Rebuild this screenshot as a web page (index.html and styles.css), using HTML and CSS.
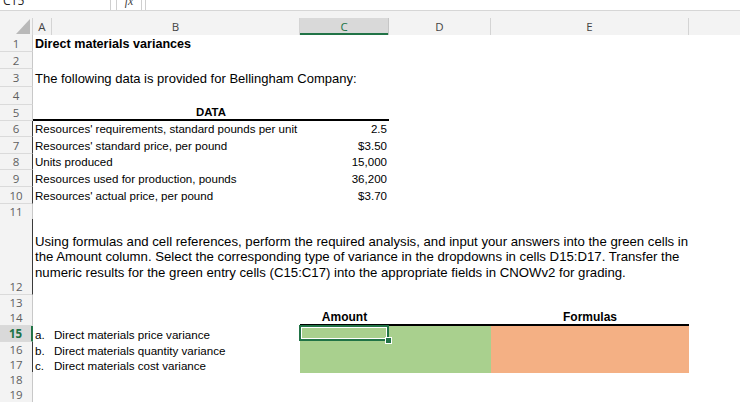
FILE: index.html
```html
<!DOCTYPE html>
<html>
<head>
<meta charset="utf-8">
<link rel="stylesheet" href="styles.css">
</head>
<body>
<div class="fbar">
  <div class="namebox"><span class="nb-text">C15</span><svg class="chev" width="8" height="5" viewBox="0 0 8 5"><polyline points="0.5,0.5 4,4 7.5,0.5" fill="none" stroke="#555" stroke-width="1"/></svg></div>
  <div class="fxbox"><span class="fx">fx</span></div>
  <div class="finput"></div>
</div>
<div class="chead">
  <div class="corner"><svg width="14" height="15" viewBox="0 0 14 15"><polygon points="14,0 14,15 0,15" fill="#b9b9b9"/></svg></div>
  <div class="ch">A</div>
  <div class="ch">B</div>
  <div class="ch sel">C</div>
  <div class="ch">D</div>
  <div class="ch">E</div>
  <div class="ch last"></div>
</div>
<div class="sheet">
  <div class="row h17"><div class="rh">1</div><div class="c span-ae title">Direct materials variances</div></div>
  <div class="row h17"><div class="rh">2</div></div>
  <div class="row h18"><div class="rh">3</div><div class="c span-ae intro">The following data is provided for Bellingham Company:</div></div>
  <div class="row h18"><div class="rh">4</div></div>
  <div class="row h16"><div class="rh">5</div><div class="c span-ac data-head">DATA</div></div>
  <div class="row h16"><div class="rh rh-dark">6</div><div class="c span-ab dl">Resources' requirements, standard pounds per unit</div><div class="c num dl">2.5</div></div>
  <div class="row h17"><div class="rh rh-dark">7</div><div class="c span-ab dl">Resources' standard price, per pound</div><div class="c num dl">$3.50</div></div>
  <div class="row h16"><div class="rh rh-dark">8</div><div class="c span-ab dl">Units produced</div><div class="c num dl">15,000</div></div>
  <div class="row h17"><div class="rh rh-dark">9</div><div class="c span-ab dl">Resources used for production, pounds</div><div class="c num dl">36,200</div></div>
  <div class="row h17"><div class="rh rh-dark">10</div><div class="c span-ab dl">Resources' actual price, per pound</div><div class="c num dl">$3.70</div></div>
  <div class="row h15"><div class="rh">11</div></div>
  <div class="row h76"><div class="rh rh-bottom rh-dark">12</div><div class="c span-ae para">Using formulas and cell references, perform the required analysis, and input your answers into the green cells in<br>the Amount column. Select the corresponding type of variance in the dropdowns in cells D15:D17. Transfer the<br>numeric results for the green entry cells (C15:C17) into the appropriate fields in CNOWv2 for grading.</div></div>
  <div class="row h15"><div class="rh">13</div></div>
  <div class="row h16"><div class="rh">14</div><div class="c col-c colhead">Amount</div><div class="c col-d colhead"></div><div class="c col-e colhead">Formulas</div></div>
  <div class="row h16"><div class="rh rh-sel">15</div><div class="c col-a item">a.</div><div class="c col-b item">Direct materials price variance</div><div class="c col-c green active"></div><div class="c col-d green"></div><div class="c col-e orange"></div></div>
  <div class="row h15"><div class="rh rh-dark">16</div><div class="c col-a item">b.</div><div class="c col-b item">Direct materials quantity variance</div><div class="c col-c green"></div><div class="c col-d green"></div><div class="c col-e orange"></div></div>
  <div class="row h15"><div class="rh rh-dark">17</div><div class="c col-a item">c.</div><div class="c col-b item">Direct materials cost variance</div><div class="c col-c green"></div><div class="c col-d green"></div><div class="c col-e orange"></div></div>
  <div class="row h15"><div class="rh">18</div></div>
  <div class="row h15"><div class="rh">19</div></div>
</div>
</body>
</html>
```

FILE: styles.css
```css
html, body {
  margin: 0;
  padding: 0;
}
body {
  width: 740px;
  height: 402px;
  overflow: hidden;
  background: #ffffff;
  font-family: "Liberation Sans", Arial, sans-serif;
  color: #000;
}

/* formula bar (mostly scrolled out of view) */
.fbar {
  display: flex;
  height: 24px;
  margin-top: -14px;
  background: #ffffff;
  border-bottom: 1px solid #d6d6d6;
}
.namebox {
  width: 111px;
  border-right: 1px solid #cfcfcf;
  display: flex;
  align-items: center;
  justify-content: space-between;
  padding-top: 4px;
  box-sizing: border-box;
}
.nb-text {
  font-family: "Open Sans", "Noto Sans", sans-serif;
  font-size: 12px;
  color: #222;
  padding-left: 3px;
}
.chev {
  margin-right: 3px;
  margin-top: -8px;
}
.fxbox {
  width: 26px;
  margin-left: 5px;
  border-left: 1px solid #cfcfcf;
  border-right: 1px solid #cfcfcf;
  display: flex;
  justify-content: center;
  align-items: center;
  padding-top: 6px;
  box-sizing: border-box;
}
.fx {
  font-family: "Liberation Serif", serif;
  font-style: italic;
  font-size: 12px;
  color: #444;
}
.finput {
  flex: 1;
  margin-left: 3px;
  border-left: 1px solid #cfcfcf;
}

/* shared column grid */
.chead, .row {
  display: grid;
  grid-template-columns: 33px 19px 248px 89px 102px 198px 1fr;
}

/* column headers */
.chead {
  background: #f3f3f3;
  padding-top: 7px;
  height: 17px;
}
.corner {
  border-right: 1px solid #d4d4d4;
  display: flex;
  justify-content: flex-end;
  align-items: flex-end;
  padding: 0 2px 1px 0;
}
.ch {
  border-right: 1px solid #d4d4d4;
  font-family: "Open Sans", "Noto Sans", sans-serif;
  font-size: 11.5px;
  color: #444;
  text-align: center;
  line-height: 17px;
}
.ch.sel {
  background: #d9d9d9;
  color: #217346;
  border-right-color: #c6c6c6;
  box-shadow: inset 0 -2px 0 #217346;
}
.ch.last {
  border-right: none;
}

/* rows */
.h15 { height: 15px; }
.h16 { height: 16px; }
.h17 { height: 17px; }
.h18 { height: 18px; }
.h76 { height: 76px; }

.rh {
  grid-column: 1;
  background: #f3f3f3;
  border-right: 1px solid #c8c8c8;
  border-bottom: 1px solid #dadada;
  box-sizing: border-box;
  font-family: "Open Sans", "Noto Sans", sans-serif;
  font-size: 11.5px;
  color: #5f5f5f;
  text-align: center;
  display: flex;
  align-items: center;
  justify-content: center;
}
.rh-dark {
  border-right-color: #3a3a3a;
}
.rh-bottom {
  align-items: flex-end;
  padding-bottom: 0;
}
.rh-sel {
  background: #d9d9d9;
  color: #217346;
  font-weight: bold;
  border-right: 2px solid #217346;
}

.c {
  white-space: nowrap;
  display: flex;
  align-items: center;
  box-sizing: border-box;
  min-width: 0;
}
.span-ae { grid-column: 2 / 7; padding-left: 2px; }
.span-ac { grid-column: 2 / 5; }
.span-ab { grid-column: 2 / 4; padding-left: 2px; }
.col-a { grid-column: 2; padding-left: 2px; }
.col-b { grid-column: 3; padding-left: 2px; }
.col-c { grid-column: 4; }
.col-d { grid-column: 5; }
.col-e { grid-column: 6; }

.title {
  font-weight: bold;
  font-size: 12.6px;
  padding-top: 1px;
}
.intro {
  font-size: 13px;
}
.data-head {
  font-weight: bold;
  font-size: 11.4px;
  justify-content: center;
  border-bottom: 2px solid #000;
}
.dl {
  font-size: 11.55px;
}
.num {
  grid-column: 4;
  justify-content: flex-end;
  padding-right: 2px;
}
.para {
  font-size: 13.2px;
  line-height: 15.5px;
  white-space: nowrap;
}
.colhead {
  font-weight: bold;
  font-size: 12px;
  justify-content: center;
  border-bottom: 2px solid #000;
}
.item {
  font-size: 11.6px;
}
.green { background: #a9d08e; }
.orange { background: #f4b084; }

.active {
  position: relative;
}
.active::before {
  content: "";
  position: absolute;
  left: -1px;
  top: -1px;
  right: 0;
  bottom: 1px;
  border: 2px solid #217346;
  box-shadow: inset 0 0 0 1px #ffffff;
}
.active::after {
  content: "";
  position: absolute;
  right: -3px;
  bottom: -2px;
  width: 5px;
  height: 5px;
  background: #217346;
  border: 1px solid #ffffff;
}
```
